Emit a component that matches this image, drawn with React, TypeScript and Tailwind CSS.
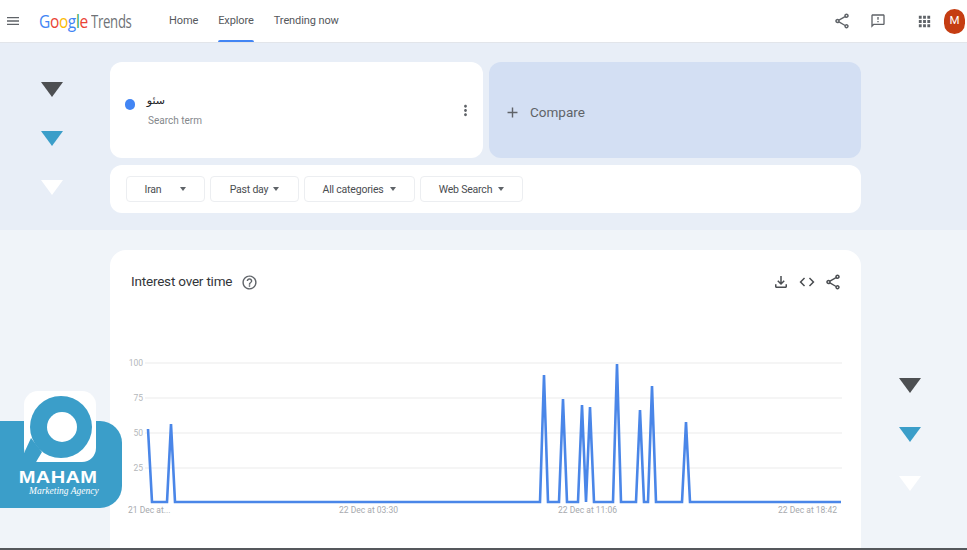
import React from 'react';
import { MdMenu, MdOutlineShare, MdOutlineFeedback, MdApps, MdMoreVert, MdAdd, MdOutlineFileDownload, MdCode, MdHelpOutline } from 'react-icons/md';

const font = 'font-["Roboto","Liberation_Sans",sans-serif]';

const Arrows: React.FC<{ className: string }> = ({ className }) => (
  <div className={`absolute flex flex-col gap-[34px] ${className}`}>
    <div className="w-0 h-0 border-l-[11px] border-r-[11px] border-t-[15px] border-l-transparent border-r-transparent border-t-[#4d4f52]" />
    <div className="w-0 h-0 border-l-[11px] border-r-[11px] border-t-[15px] border-l-transparent border-r-transparent border-t-[#3b9ec9]" />
    <div className="w-0 h-0 border-l-[11px] border-r-[11px] border-t-[15px] border-l-transparent border-r-transparent border-t-white" />
  </div>
);

const FilterChip: React.FC<{ label: string; width: string; gap: string }> = ({ label, width, gap }) => (
  <div className={`${width} h-[26px] flex items-center justify-center rounded-[4px] border border-[#eceef1] text-[10.5px] tracking-[-0.2px] text-[#4a4d51] ${gap}`}>
    <span className="mt-[1px]">{label}</span>
    <div className="w-0 h-0 border-l-[3.5px] border-r-[3.5px] border-t-[4px] border-l-transparent border-r-transparent border-t-[#5f6368]" />
  </div>
);

// chart points, x/y in page pixels, shifted into the svg below
const spikes: [number, number][] = [
  [171, 424], [544, 375], [563, 399], [582, 405], [590, 407], [617, 364], [640, 410], [652, 386], [686, 422],
];

const buildLine = () => {
  const pts: string[] = ['148,429', '152,502', '167,502'];
  spikes.forEach(([x, y]) => {
    if (x !== 171 && x !== 590) pts.push(`${x - 4},502`);
    if (x === 590) pts.push('586,502');
    pts.push(`${x},${y}`);
    pts.push(`${x + 4},502`);
  });
  pts.push('841,502');
  return pts.map((p) => {
    const [x, y] = p.split(',').map(Number);
    return `${x - 128},${y - 355}`;
  }).join(' ');
};

const yLabels = [
  { label: '100', y: 8 },
  { label: '75', y: 43 },
  { label: '50', y: 78 },
  { label: '25', y: 113 },
];

const Chart: React.FC = () => (
  <svg width="716" height="165" viewBox="0 0 716 165" className="block">
    {yLabels.map((l) => (
      <g key={l.label}>
        <text x="15" y={l.y + 3} textAnchor="end" fontSize="8.5" fill="#b4b7bb" fontFamily="Roboto, sans-serif">{l.label}</text>
        <line x1="17" x2="714" y1={l.y} y2={l.y} stroke="#ebebeb" strokeWidth="1" />
      </g>
    ))}
    <polyline points={buildLine()} fill="none" stroke="#4a86e8" strokeWidth="2.6" strokeLinejoin="miter" />
  </svg>
);

const MahamLogo: React.FC = () => (
  <div className="absolute left-0 top-[421px] w-[122px] h-[87px] bg-[#3b9ec9] rounded-r-[22px]">
    <div className="absolute left-[24px] top-[-30px] w-[72px] h-[71px] bg-white rounded-[14px]" />
    <svg width="72" height="72" viewBox="0 0 72 72" className="absolute left-[24px] top-[-30px]">
      <circle cx="37" cy="36" r="31" fill="#3b9ec9" />
      <path d="M7 47 1 60v11h11l6-10z" fill="#3b9ec9" />
      <circle cx="38" cy="36" r="15" fill="white" />
    </svg>
    <div className="absolute left-0 right-0 top-[47px] text-center pr-[5px] text-[17px] leading-[20px] font-bold tracking-[0.3px] text-white font-['Liberation_Sans',sans-serif] scale-x-[1.18]">
      MAHAM
    </div>
    <div className="absolute left-[29px] top-[64px] text-[9.5px] leading-[12px] italic text-white font-['Liberation_Serif',serif]">
      Marketing Agency
    </div>
  </div>
);

export default function App() {
  return (
    <div className={`relative w-[967px] h-[550px] overflow-hidden bg-[#f0f4f9] ${font}`}>
      <header className="h-[43px] bg-white border-b border-[#e2e5ea] flex items-center pl-[5px] pr-[2px]">
        <MdMenu size={16} className="text-[#5f6368]" />
        <div className="ml-[18px] flex items-center h-[24px] text-[18px] leading-[24px] font-['Open_Sans',sans-serif]">
          <span className="block w-[52px] origin-left scale-x-[0.86] tracking-[-0.4px] whitespace-nowrap">
            <span className="text-[#4285f4]">G</span>
            <span className="text-[#ea4335]">o</span>
            <span className="text-[#fbbc05]">o</span>
            <span className="text-[#4285f4]">g</span>
            <span className="text-[#34a853]">l</span>
            <span className="text-[#ea4335]">e</span>
          </span>
          <span className="block w-[40px] origin-left scale-x-[0.73] tracking-[-0.4px] text-[#6f7377]">Trends</span>
        </div>
        <nav className="ml-[38px] flex h-full text-[11px] tracking-[-0.1px] text-[#55585c]">
          <div className="flex items-center pt-[1px]">Home</div>
          <div className="relative ml-[20px] flex items-center pt-[1px]">
            Explore
            <div className="absolute left-0 right-0 bottom-0 h-[2.5px] rounded-t bg-[#4285f4]" />
          </div>
          <div className="ml-[20px] flex items-center pt-[1px]">Trending now</div>
        </nav>
        <div className="ml-auto flex items-center text-[#5f6368]">
          <MdOutlineShare size={18} />
          <MdOutlineFeedback size={16} className="ml-[19px]" />
          <MdApps size={17} className="ml-[30px]" />
          <div className="ml-[11px] w-[21px] h-[25px] rounded-full bg-[#c53d12] text-white text-[11.5px] flex items-center justify-center">M</div>
        </div>
      </header>

      <section className="h-[187px] bg-[#e8eef7] pl-[110px] pt-[19px]">
        <div className="w-[751px] flex gap-[6px]">
          <div className="w-[373px] h-[96px] bg-white rounded-[12px] flex items-center pl-[15px] pr-[9px]">
            <div className="w-[10px] h-[11px] rounded-full bg-[#4285f4] mt-[-12px]" />
            <div className="ml-[13px] flex-1">
              <div dir="rtl" className="text-right w-[17px] text-[11px] leading-[16px] text-[#202124] font-['DejaVu_Sans',sans-serif]">سئو</div>
              <div className="mt-[5px] text-[10px] leading-[14px] text-[#85888c]">Search term</div>
            </div>
            <MdMoreVert size={17} className="text-[#5f6368]" />
          </div>
          <div className="w-[372px] h-[96px] bg-[#d3dff3] rounded-[12px] flex items-center pl-[15px] pt-[4px] text-[#5f6368]">
            <MdAdd size={17} />
            <span className="ml-[9px] text-[13.5px]">Compare</span>
          </div>
        </div>
        <div className="mt-[7px] w-[751px] h-[48px] bg-white rounded-[12px] flex items-center pl-[16px] gap-[5px]">
          <FilterChip label="Iran" width="w-[79px]" gap="gap-[19px]" />
          <FilterChip label="Past day" width="w-[89px]" gap="gap-[5px]" />
          <FilterChip label="All categories" width="w-[111px]" gap="gap-[7px]" />
          <FilterChip label="Web Search" width="w-[103px]" gap="gap-[6px]" />
        </div>
      </section>

      <section className="pl-[110px] pt-[20px]">
        <div className="w-[751px] h-[300px] bg-white rounded-t-[16px] pl-[20px] pr-[19px] pt-[22px]">
          <div className="flex items-center h-[20px]">
            <span className="ml-[1px] mt-[-1px] text-[13.5px] tracking-[-0.2px] text-[#33363a]">Interest over time</span>
            <MdHelpOutline size={17} className="ml-[9px] text-[#5f6368]" />
            <div className="ml-auto flex items-center gap-[8px] text-[#4a4d51]">
              <MdOutlineFileDownload size={18} />
              <MdCode size={18} />
              <MdOutlineShare size={18} />
            </div>
          </div>
          <div className="ml-[-2px] mt-[63px]">
            <Chart />
          </div>
          <div className="relative h-[12px] mt-[-16px] text-[8.5px] leading-[12px] text-[#a7aaae]">
            <span className="absolute left-[-2px]">21 Dec at...</span>
            <span className="absolute left-[209px]">22 Dec at 03:30</span>
            <span className="absolute left-[428px]">22 Dec at 11:06</span>
            <span className="absolute left-[648px]">22 Dec at 18:42</span>
          </div>
        </div>
      </section>

      <Arrows className="left-[41px] top-[82px]" />
      <Arrows className="left-[899px] top-[378px]" />
      <MahamLogo />
      <div className="absolute left-0 right-0 bottom-0 h-[2px] bg-[#55585c]" />
    </div>
  );
}
